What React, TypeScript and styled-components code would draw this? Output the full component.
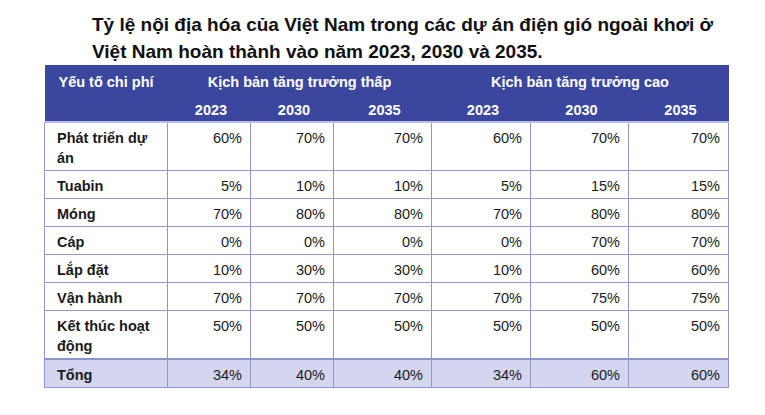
import React from "react";
import styled, { createGlobalStyle } from "styled-components";

const Global = createGlobalStyle`
  html, body { margin: 0; padding: 0; background: #ffffff; }
  body { font-family: "Liberation Sans", Arial, sans-serif; color: #1a1a1a; }
`;

const Page = styled.div`
  width: 765px;
  height: 415px;
  box-sizing: border-box;
  padding: 11px 0 0 44px;
  overflow: hidden;
`;

const Title = styled.h1`
  margin: 0 0 0 48px;
  font-size: 19px;
  line-height: 27px;
  font-weight: 700;
  color: #111111;
  height: 54px;
`;

const Table = styled.table`
  border-collapse: collapse;
  table-layout: fixed;
  width: 684px;
  font-size: 14.5px;
`;

const HeadCell = styled.th<{ $tall?: boolean }>`
  background: #3b479f;
  color: #ffffff;
  font-weight: 700;
  text-align: center;
  vertical-align: top;
  padding: ${(p) => (p.$tall ? "7px 4px 0" : "5px 4px 0 8px")};
  height: ${(p) => (p.$tall ? "30px" : "27px")};
  box-sizing: border-box;
  line-height: 20px;
  border: none;
`;

const HeadRow = styled.tr<{ $last?: boolean }>`
  border-bottom: ${(p) => (p.$last ? "2px solid #b8bce6" : "none")};
`;

const Row = styled.tr<{ $total?: boolean }>`
  background: ${(p) => (p.$total ? "#d4d6ef" : "#ffffff")};
  border-top: ${(p) => (p.$total ? "2px solid #8c92cc" : "none")};
`;

const Label = styled.td`
  font-weight: 700;
  text-align: left;
  vertical-align: top;
  padding: 5px 14px 2px 12px;
  line-height: 20px;
  border: 1px solid #9298d2;
`;

const Value = styled.td`
  text-align: right;
  vertical-align: top;
  padding: 5px 8px 2px 4px;
  line-height: 20px;
  border: 1px solid #9298d2;
`;

const widths = [123, 83, 83, 98, 99, 98, 100];

const rows: [string, string[]][] = [
  ["Phát triển dự án", ["60%", "70%", "70%", "60%", "70%", "70%"]],
  ["Tuabin", ["5%", "10%", "10%", "5%", "15%", "15%"]],
  ["Móng", ["70%", "80%", "80%", "70%", "80%", "80%"]],
  ["Cáp", ["0%", "0%", "0%", "0%", "70%", "70%"]],
  ["Lắp đặt", ["10%", "30%", "30%", "10%", "60%", "60%"]],
  ["Vận hành", ["70%", "70%", "70%", "70%", "75%", "75%"]],
  ["Kết thúc hoạt động", ["50%", "50%", "50%", "50%", "50%", "50%"]],
];

const total = ["34%", "40%", "40%", "34%", "60%", "60%"];
const years = ["2023", "2030", "2035", "2023", "2030", "2035"];

export default function App() {
  return (
    <>
      <Global />
      <Page>
        <Title>
          Tỷ lệ nội địa hóa của Việt Nam trong các dự án điện gió ngoài khơi ở
          <br />
          Việt Nam hoàn thành vào năm 2023, 2030 và 2035.
        </Title>
        <Table>
          <colgroup>
            {widths.map((w, i) => (
              <col key={i} style={{ width: w }} />
            ))}
          </colgroup>
          <thead>
            <HeadRow>
              <HeadCell $tall>Yếu tố chi phí</HeadCell>
              <HeadCell $tall colSpan={3}>
                Kịch bản tăng trưởng thấp
              </HeadCell>
              <HeadCell $tall colSpan={3}>
                Kịch bản tăng trưởng cao
              </HeadCell>
            </HeadRow>
            <HeadRow $last>
              <HeadCell />
              {years.map((y, i) => (
                <HeadCell key={i}>{y}</HeadCell>
              ))}
            </HeadRow>
          </thead>
          <tbody>
            {rows.map(([label, vals]) => (
              <Row key={label}>
                <Label>{label}</Label>
                {vals.map((v, i) => (
                  <Value key={i}>{v}</Value>
                ))}
              </Row>
            ))}
            <Row $total>
              <Label>Tổng</Label>
              {total.map((v, i) => (
                <Value key={i}>{v}</Value>
              ))}
            </Row>
          </tbody>
        </Table>
      </Page>
    </>
  );
}
